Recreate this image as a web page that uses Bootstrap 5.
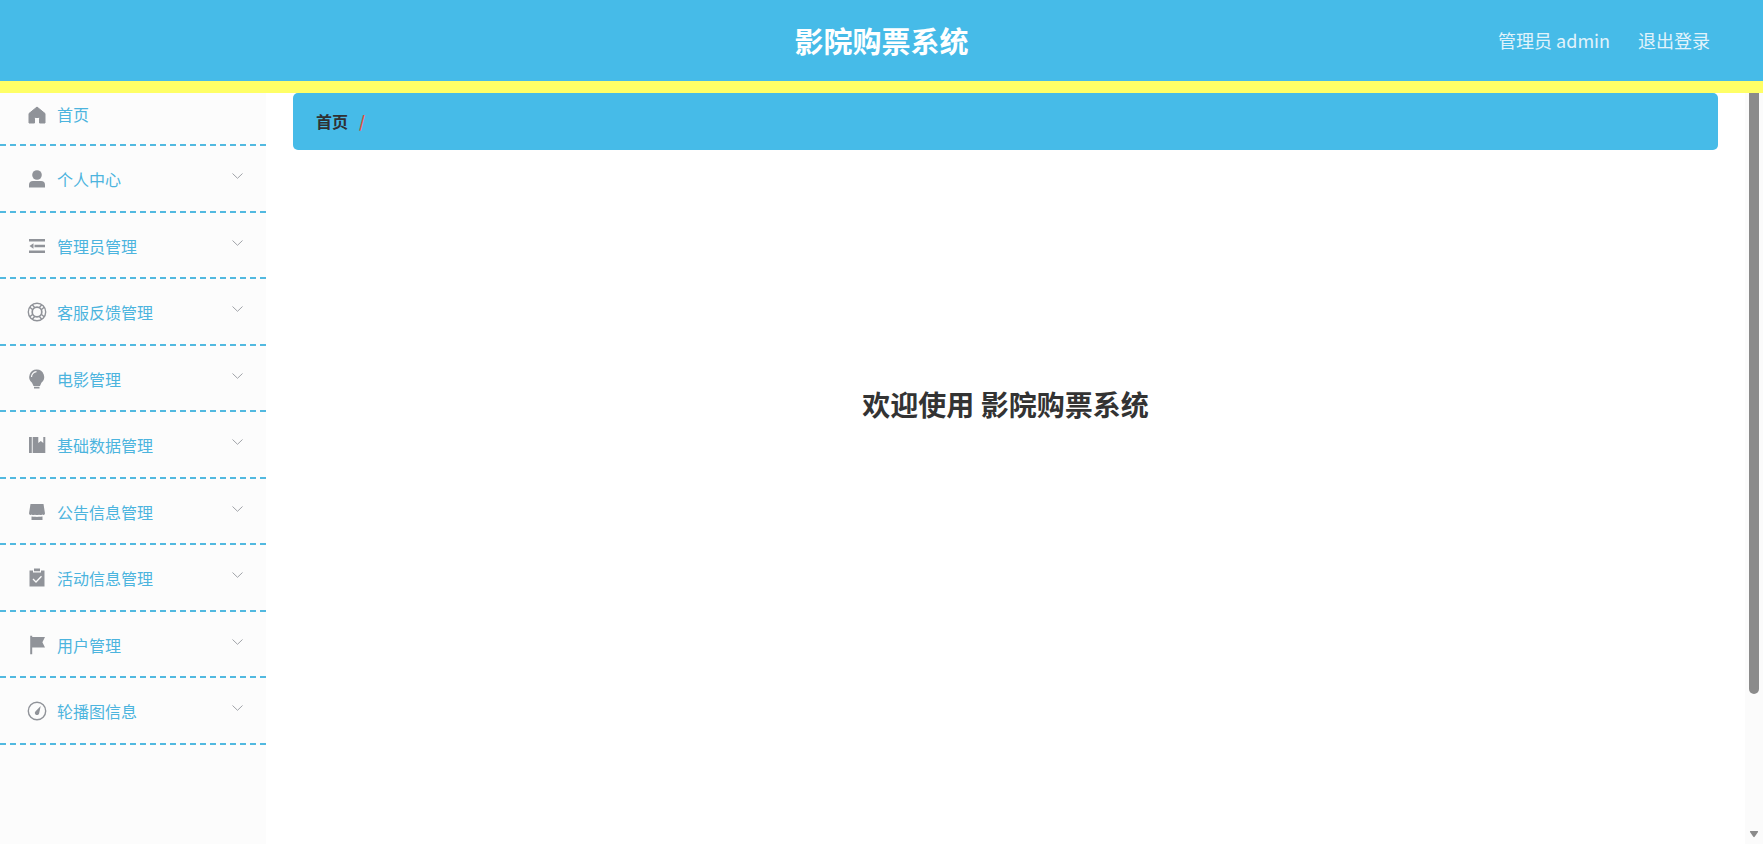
<!DOCTYPE html>
<html lang="zh-CN">
<head>
<meta charset="utf-8">
<meta name="viewport" content="width=device-width, initial-scale=1">
<title>影院购票系统</title>
<link href="https://cdn.jsdelivr.net/npm/bootstrap@5.3.0/dist/css/bootstrap.min.css" rel="stylesheet">
<style>
  :root { --sky: #46bbe8; --ink: #333; --icon: #909399; }
  body { font-family: "Noto Sans CJK SC", "Noto Sans", sans-serif; font-size: 16px; line-height: 24px; color: var(--ink); background: #fff; }
  .app-header { background: var(--sky); border-bottom: 12px solid #ff6; height: 93px; padding: 0 53px 2px; }
  .header-side { flex: 1 1 0; gap: 28px; }
  .app-title { font-size: 29px; line-height: 40px; font-weight: 700; color: #fff; }
  .header-link { font-size: 18px; color: #e1f3fb; text-decoration: none; }
  .side-menu { width: 266px; background: #fcfcfc; }
  .menu-row { height: 66px; gap: 11px; padding: 1px 23px 0 28px; background: none; border: 0; border-bottom: 2px dashed #52b9e0; color: #4cb4de; text-decoration: none; text-align: left; }
  li:nth-child(even) > .menu-row { height: 67px; }
  .menu-row.first { height: 53px; padding-bottom: 11px; }
  .menu-icon { width: 18px; height: 18px; overflow: visible; fill: var(--icon); stroke: none; }
  .menu-arrow { width: 11px; height: 6px; margin-bottom: 6px; fill: none; stroke: #a0a3a8; }
  .main-area { padding: 0 27px; min-width: 0; }
  .crumb-bar { height: 57px; background: var(--sky); border-radius: 5px; padding: 0 23px 2px; }
  .crumb-bar a { font-weight: 700; color: #303133; text-decoration: none; }
  .crumb-slash { color: #e0553f; font-weight: 700; margin-left: 11px; }
  .welcome { font-size: 28px; line-height: 40px; font-weight: 700; margin-top: 234px; }
  .scroll-track { width: 18px; background: #fbfbfb; padding: 0 4px; }
  .scroll-thumb { width: 10px; height: 80%; background: #8b8b8b; border-radius: 0 0 5px 5px; }
  .scroll-arrow { width: 10px; height: 8px; margin-bottom: 6px; fill: #8b8b8b; }
</style>
</head>
<body>
<div class="d-flex flex-column vh-100 overflow-hidden">
  <header class="app-header d-flex align-items-center flex-shrink-0">
    <div class="header-side"></div>
    <h1 class="app-title m-0">影院购票系统</h1>
    <nav class="header-side d-flex justify-content-end">
      <a class="header-link" href="#">管理员 admin</a>
      <a class="header-link" href="#">退出登录</a>
    </nav>
  </header>
  <div class="d-flex flex-grow-1 overflow-hidden">
    <aside class="side-menu flex-shrink-0">
      <ul class="list-unstyled m-0">
        <li><a class="menu-row first d-flex align-items-center w-100" href="#">
          <svg class="menu-icon" viewBox="0 0 18 18"><path d="M9 2 17 8.500V18h-5.500v-4.500a1 1 0 0 0-1-1h-3a1 1 0 0 0-1 1V18H1V8.500z" stroke="#909399" stroke-linejoin="round"/></svg>
          <span>首页</span></a></li>
        <li><button type="button" class="menu-row d-flex align-items-center w-100">
          <svg class="menu-icon" viewBox="0 0 18 18"><circle cx="9" cy="5" r="4.800"/><path d="M1 17.500v-2.500a4 4 0 0 1 4-4h8a4 4 0 0 1 4 4v2.500z"/></svg>
          <span>个人中心</span>
          <svg class="menu-arrow ms-auto" viewBox="0 0 11 6"><path d="M.5.500 5.500 5.300 10.500.5"/></svg></button></li>
        <li><button type="button" class="menu-row d-flex align-items-center w-100">
          <svg class="menu-icon" viewBox="0 0 18 18"><path d="M1 2h16v2.600H1zM6.500 7.800H17v2.500H6.500zM1 13.400h16V16H1zM1.500 9l4-2.800v5.600z"/></svg>
          <span>管理员管理</span>
          <svg class="menu-arrow ms-auto" viewBox="0 0 11 6"><path d="M.5.500 5.500 5.300 10.500.5"/></svg></button></li>
        <li><button type="button" class="menu-row d-flex align-items-center w-100">
          <svg class="menu-icon" viewBox="0 0 18 18"><g fill="none" stroke="#909399" stroke-width="1.400"><circle cx="9" cy="9" r="8.700"/><circle cx="9" cy="9" r="4.800" stroke-width="1.700"/><path d="M4.300 1.800 6.800 4.800M1.800 4.300l3 2.500M13.700 1.800l-2.500 3M16.200 4.300l-3 2.500M4.300 16.200l2.500-3M1.800 13.700l3-2.500M13.700 16.200l-2.500-3M16.200 13.700l-3-2.500"/></g></svg>
          <span>客服反馈管理</span>
          <svg class="menu-arrow ms-auto" viewBox="0 0 11 6"><path d="M.5.500 5.500 5.300 10.500.5"/></svg></button></li>
        <li><button type="button" class="menu-row d-flex align-items-center w-100">
          <svg class="menu-icon" viewBox="0 0 18 18"><path d="M8.700-.5a7.500 7.500 0 0 1 4.700 13.300L12 16H5.500L4 12.800A7.500 7.500 0 0 1 8.700-.5zM6 16.800h5.500v1.700H6z"/><path d="M3.500 7A5.200 5.200 0 0 1 8.500 1.700" fill="none" stroke="#fcfcfc" stroke-width="1.200"/></svg>
          <span>电影管理</span>
          <svg class="menu-arrow ms-auto" viewBox="0 0 11 6"><path d="M.5.500 5.500 5.300 10.500.5"/></svg></button></li>
        <li><button type="button" class="menu-row d-flex align-items-center w-100">
          <svg class="menu-icon" viewBox="0 0 18 18"><path d="M1 1h2.800v16H1zM4.700 1h5.600v6l2.500-2L15.300 7V1H17.300v16H4.700z"/></svg>
          <span>基础数据管理</span>
          <svg class="menu-arrow ms-auto" viewBox="0 0 11 6"><path d="M.5.500 5.500 5.300 10.500.5"/></svg></button></li>
        <li><button type="button" class="menu-row d-flex align-items-center w-100">
          <svg class="menu-icon" viewBox="0 0 18 18"><path d="M2.500 1h13L17 10.500a2 2 0 0 1-2 1.500H3a2 2 0 0 1-2-1.500zM3.500 13.500h11V17h-11z"/><path d="M3.500 11q1.500 2.500 3.500.5 2 2.500 4 0 2 2 3.500-.5v1.700q-2 1.300-3.500.5-2 1.300-4 0-1.500.8-3.500-.5z" fill="#fcfcfc"/></svg>
          <span>公告信息管理</span>
          <svg class="menu-arrow ms-auto" viewBox="0 0 11 6"><path d="M.5.500 5.500 5.300 10.500.5"/></svg></button></li>
        <li><button type="button" class="menu-row d-flex align-items-center w-100">
          <svg class="menu-icon" viewBox="0 0 18 18"><path d="M2 1.500h3v2h8v-2h3.500v16h-15v-16zM6-.5h6v2.800H6z"/><path d="m5 10 3 3 5.500-5.800" fill="none" stroke="#fcfcfc" stroke-width="1.300"/></svg>
          <span>活动信息管理</span>
          <svg class="menu-arrow ms-auto" viewBox="0 0 11 6"><path d="M.5.500 5.500 5.300 10.500.5"/></svg></button></li>
        <li><button type="button" class="menu-row d-flex align-items-center w-100">
          <svg class="menu-icon" viewBox="0 0 18 18"><path d="M2.200-.3h2v1.200H17l-2.600 5.300 2.600 5.300H4.200v6.700h-2z"/></svg>
          <span>用户管理</span>
          <svg class="menu-arrow ms-auto" viewBox="0 0 11 6"><path d="M.5.500 5.500 5.300 10.500.5"/></svg></button></li>
        <li><button type="button" class="menu-row d-flex align-items-center w-100">
          <svg class="menu-icon" viewBox="0 0 18 18"><circle cx="9" cy="9" r="8.700" fill="none" stroke="#909399" stroke-width="1.400"/><path d="M12.700 4 11.200 11a2.200 2.200 0 1 1-3.800-1.600z"/></svg>
          <span>轮播图信息</span>
          <svg class="menu-arrow ms-auto" viewBox="0 0 11 6"><path d="M.5.500 5.500 5.300 10.500.5"/></svg></button></li>
      </ul>
    </aside>
    <main class="main-area flex-grow-1">
      <nav class="crumb-bar d-flex align-items-center" aria-label="breadcrumb"><a href="#">首页</a><span class="crumb-slash">/</span></nav>
      <h2 class="welcome text-center mb-0">欢迎使用 影院购票系统</h2>
    </main>
    <div class="scroll-track d-flex flex-column justify-content-between flex-shrink-0" aria-hidden="true">
      <div class="scroll-thumb"></div>
      <svg class="scroll-arrow" viewBox="0 0 10 8"><path d="M1.500 1h7a.7.7 0 0 1 .5 1L5.700 6.700a.9.900 0 0 1-1.400 0L1 2a.7.7 0 0 1 .5-1z"/></svg>
    </div>
  </div>
</div>
<script src="https://cdn.jsdelivr.net/npm/bootstrap@5.3.0/dist/js/bootstrap.bundle.min.js"></script>
</body>
</html>
